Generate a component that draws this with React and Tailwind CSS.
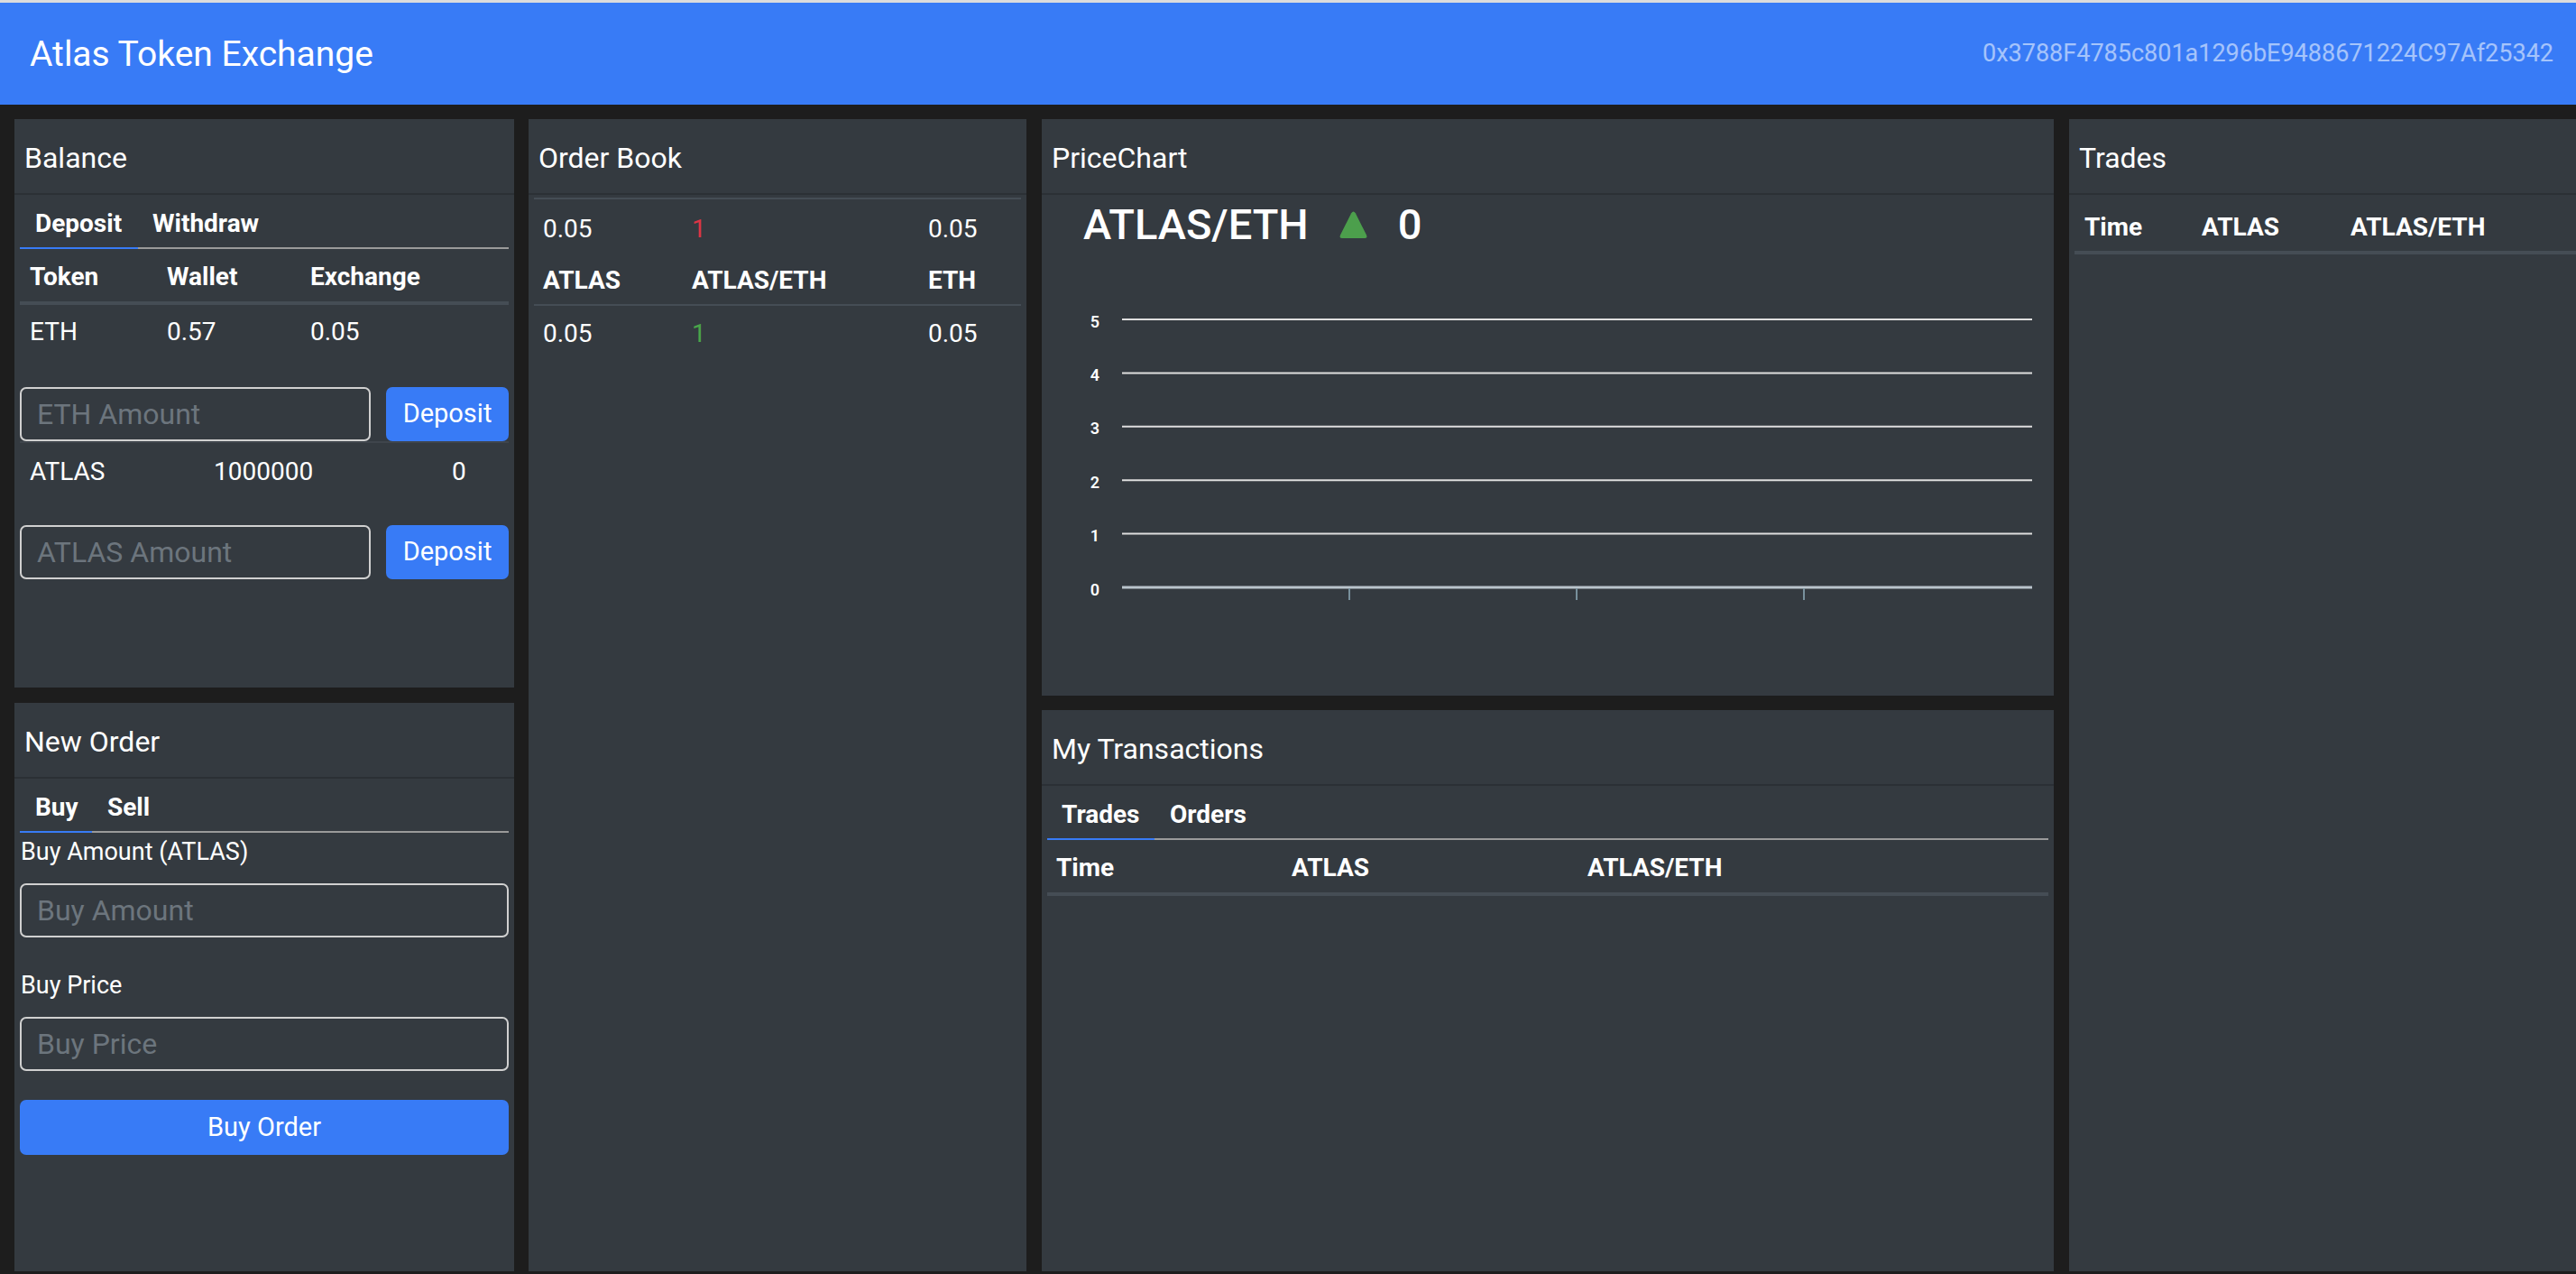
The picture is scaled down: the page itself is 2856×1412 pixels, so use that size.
import React from "react";

const FONT = "font-['Roboto','Liberation_Sans',sans-serif]";

function Panel({ title, className = "", children }) {
  return (
    <div className={`bg-[#343a40] flex flex-col ${className}`}>
      <div className="h-[84px] shrink-0 flex items-center pt-[3px] px-[11px] text-[32px] leading-[48px] text-white border-b-2 border-[#2b3035]">
        {title}
      </div>
      {children}
    </div>
  );
}

function Tabs({ items, widths }) {
  return (
    <div className="flex border-b-2 border-[#9a9a9a] h-[54px]">
      {items.map((t, i) => (
        <div
          key={t}
          className={`h-[54px] flex items-center text-[28px] leading-[42px] font-bold text-white -mb-[2px] ${widths[i]} ${
            i === 0 ? "border-b-2 border-[#387bf6]" : "border-b-2 border-transparent"
          }`}
        >
          {t}
        </div>
      ))}
    </div>
  );
}

function AmountForm({ placeholder }) {
  return (
    <div className="flex gap-[17px] h-[60px]">
      <input
        placeholder={placeholder}
        className="w-[389px] h-[60px] border-2 border-[#d0d0d0] rounded-[7px] bg-transparent px-[17px] text-[32px] text-white placeholder:text-[#6c757d] outline-none"
      />
      <button className="w-[136px] h-[60px] bg-[#387bf6] rounded-[7px] text-white text-[29px]">
        Deposit
      </button>
    </div>
  );
}

function Balance() {
  return (
    <Panel title="Balance" className="h-[630px]">
      <div className="px-[6px] pt-[6px]">
        <Tabs items={["Deposit", "Withdraw"]} widths={["pl-[17px] w-[131px]", "pl-[16px]"]} />
        <div className="flex h-[62px] items-center pt-[4px] border-b-4 border-[#454d55] text-[28px] font-bold text-white pl-[11px]">
          <div className="w-[152px]">Token</div>
          <div className="w-[159px]">Wallet</div>
          <div>Exchange</div>
        </div>
        <div className="flex h-[60px] items-center text-[28px] text-white pl-[11px]">
          <div className="w-[152px]">ETH</div>
          <div className="w-[159px]">0.57</div>
          <div>0.05</div>
        </div>
        <div className="mt-[31px]">
          <AmountForm placeholder="ETH Amount" />
        </div>
        <div className="flex h-[62px] items-center pt-[4px] text-[28px] text-white pl-[11px] border-t-2 border-[#3f454c]">
          <div className="w-[204px]">ATLAS</div>
          <div className="w-[264px]">1000000</div>
          <div>0</div>
        </div>
        <div className="mt-[31px]">
          <AmountForm placeholder="ATLAS Amount" />
        </div>
      </div>
    </Panel>
  );
}

function NewOrder() {
  const inputCls =
    "w-full h-[60px] border-2 border-[#d0d0d0] rounded-[7px] bg-transparent px-[17px] text-[32px] text-white placeholder:text-[#6c757d] outline-none";
  return (
    <Panel title="New Order" className="flex-1">
      <div className="px-[6px] pt-[6px]">
        <Tabs items={["Buy", "Sell"]} widths={["pl-[17px] w-[80px]", "pl-[17px]"]} />
        <div className="pl-[1px] text-[27px] leading-[42px] font-normal text-white">
          Buy Amount (ATLAS)
        </div>
        <input placeholder="Buy Amount" className={`${inputCls} mt-[14px]`} />
        <div className="mt-[32px] pl-[1px] text-[27px] leading-[42px] font-normal text-white">
          Buy Price
        </div>
        <input placeholder="Buy Price" className={`${inputCls} mt-[14px]`} />
        <button className="mt-[32px] w-full h-[61px] bg-[#387bf6] rounded-[7px] text-white text-[29px]">
          Buy Order
        </button>
      </div>
    </Panel>
  );
}

function OrderBook() {
  return (
    <Panel title="Order Book" className="h-full">
      <div className="px-[6px] pt-[3px]">
        <div className="border-t-2 border-[#454d55]">
          <div className="flex h-[62px] items-center pt-[4px] text-[28px] text-white pl-[10px]">
            <div className="w-[165px]">0.05</div>
            <div className="w-[262px] text-[#dc3545]">1</div>
            <div>0.05</div>
          </div>
          <div className="flex h-[56px] items-center pt-[2px] text-[28px] font-bold text-white pl-[10px] border-b-2 border-[#454d55]">
            <div className="w-[165px]">ATLAS</div>
            <div className="w-[262px]">ATLAS/ETH</div>
            <div>ETH</div>
          </div>
          <div className="flex h-[60px] items-center pt-[2px] text-[28px] text-white pl-[10px]">
            <div className="w-[165px]">0.05</div>
            <div className="w-[262px] text-[#4aa54a]">1</div>
            <div>0.05</div>
          </div>
        </div>
      </div>
    </Panel>
  );
}

function Chart() {
  const ys = [76, 135.4, 194.8, 254.2, 313.6, 373];
  const labels = ["5", "4", "3", "2", "1", "0"];
  return (
    <svg width="1122" height="400" viewBox="0 0 1122 400" className="block">
      {ys.slice(0, 5).map((y, i) => (
        <line key={i} x1="89" x2="1098" y1={y} y2={y} stroke="#dedede" strokeWidth="2" />
      ))}
      <line x1="89" x2="1098" y1="373" y2="373" stroke="#b9c4cc" strokeWidth="3" />
      {[341, 593, 845].map((x) => (
        <line key={x} x1={x} x2={x} y1="374" y2="387" stroke="#78909c" strokeWidth="2" />
      ))}
      {ys.map((y, i) => (
        <text
          key={i}
          x="59"
          y={y + 2}
          textAnchor="middle"
          dominantBaseline="central"
          fill="#ffffff"
          fontSize="18"
          fontWeight="600"
          fontFamily="Roboto, 'Liberation Sans', sans-serif"
        >
          {labels[i]}
        </text>
      ))}
    </svg>
  );
}

function PriceChart() {
  return (
    <Panel title="PriceChart" className="h-[639px]">
      <div className="pt-[4px]">
        <div className="flex items-center h-[58px] pl-[46px] text-[47px] font-medium text-white">
          <span>ATLAS/ETH</span>
          <svg width="31" height="31" viewBox="0 0 31 31" className="ml-[34px]">
            <path
              d="M13.2 2.2 Q15.5 -1 17.8 2.2 L30 26.5 Q31.3 30 27.8 30 L3.2 30 Q-0.3 30 1 26.5 Z"
              fill="#4c9f4c"
            />
          </svg>
          <span className="ml-[34px]">0</span>
        </div>
        <Chart />
      </div>
    </Panel>
  );
}

function MyTransactions() {
  return (
    <Panel title="My Transactions" className="flex-1">
      <div className="px-[6px] pt-[6px]">
        <Tabs items={["Trades", "Orders"]} widths={["pl-[16px] w-[119px]", "pl-[17px]"]} />
        <div className="flex h-[62px] items-center pt-[4px] border-b-4 border-[#454d55] text-[28px] font-bold text-white pl-[10px]">
          <div className="w-[261px]">Time</div>
          <div className="w-[328px]">ATLAS</div>
          <div>ATLAS/ETH</div>
        </div>
      </div>
    </Panel>
  );
}

function Trades() {
  return (
    <Panel title="Trades" className="h-full">
      <div className="pl-[6px] pt-[6px]">
        <div className="flex h-[60px] items-center pt-[4px] border-b-4 border-[#454d55] text-[28px] font-bold text-white pl-[11px]">
          <div className="w-[130px]">Time</div>
          <div className="w-[165px]">ATLAS</div>
          <div>ATLAS/ETH</div>
        </div>
      </div>
    </Panel>
  );
}

export default function App() {
  return (
    <div className={`w-[2856px] h-[1412px] bg-[#1d1d1d] overflow-hidden ${FONT}`}>
      <div className="h-[3px] bg-[#dcdcdc]" />
      <nav className="h-[113px] bg-[#387bf6] flex items-center justify-between pl-[33px] pr-[25px]">
        <span className="text-[39px] text-white leading-[60px]">Atlas Token Exchange</span>
        <span className="text-[27px] text-white/55">0x3788F4785c801a1296bE9488671224C97Af25342</span>
      </nav>
      <div className="flex h-[1296px] pt-[16px] pb-[3px] pl-[16px]">
        <div className="w-[554px] flex flex-col gap-[17px]">
          <Balance />
          <NewOrder />
        </div>
        <div className="w-[552px] ml-[16px]">
          <OrderBook />
        </div>
        <div className="w-[1122px] ml-[17px] flex flex-col gap-[16px]">
          <PriceChart />
          <MyTransactions />
        </div>
        <div className="flex-1 ml-[17px]">
          <Trades />
        </div>
      </div>
    </div>
  );
}
